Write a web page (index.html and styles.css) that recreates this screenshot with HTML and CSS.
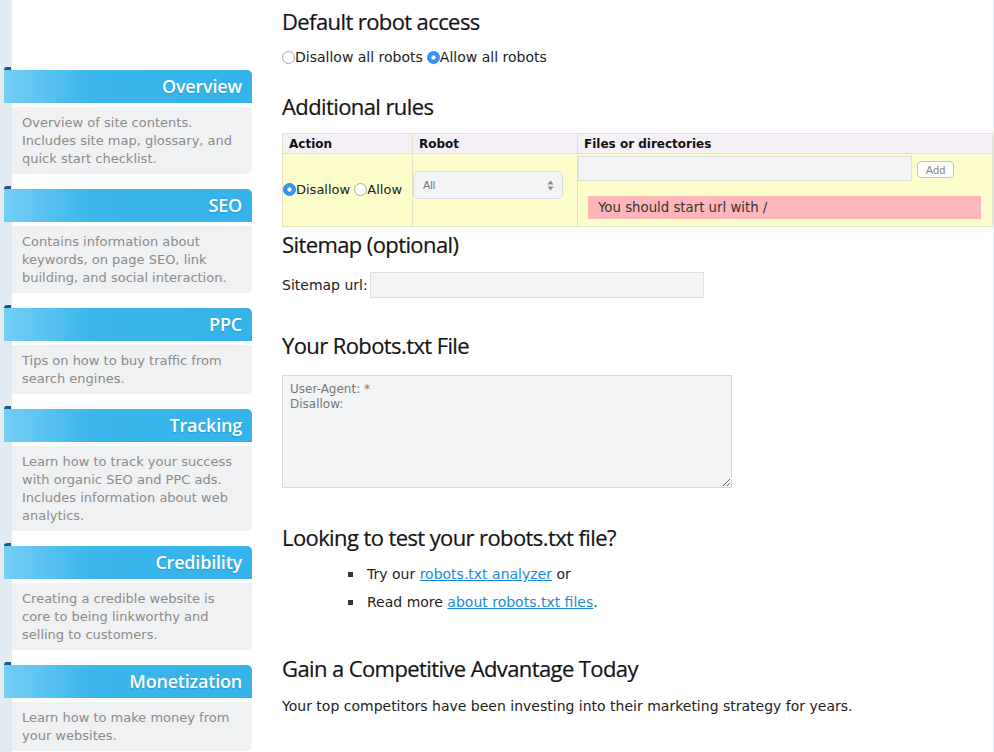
FILE: index.html
```html
<!DOCTYPE html>
<html lang="en">
<head>
<meta charset="utf-8">
<title>Robots.txt Generator</title>
<link rel="stylesheet" href="styles.css">
</head>
<body>
<div class="page">
  <aside class="sidebar">
    <div class="nav-group">
      <div class="tab"></div>
      <div class="nav-head">Overview</div>
      <div class="nav-desc">Overview of site contents. Includes site map, glossary, and quick start checklist.</div>
    </div>
    <div class="nav-group">
      <div class="tab"></div>
      <div class="nav-head">SEO</div>
      <div class="nav-desc">Contains information about keywords, on page SEO, link building, and social interaction.</div>
    </div>
    <div class="nav-group">
      <div class="tab"></div>
      <div class="nav-head">PPC</div>
      <div class="nav-desc">Tips on how to buy traffic from search engines.</div>
    </div>
    <div class="nav-group">
      <div class="tab"></div>
      <div class="nav-head">Tracking</div>
      <div class="nav-desc">Learn how to track your success with organic SEO and PPC ads. Includes information about web analytics.</div>
    </div>
    <div class="nav-group">
      <div class="tab"></div>
      <div class="nav-head">Credibility</div>
      <div class="nav-desc">Creating a credible website is core to being linkworthy and selling to customers.</div>
    </div>
    <div class="nav-group">
      <div class="tab"></div>
      <div class="nav-head">Monetization</div>
      <div class="nav-desc">Learn how to make money from your websites.</div>
    </div>
  </aside>

  <main class="main">
    <h2 class="h-first">Default robot access</h2>
    <div class="radios">
      <label class="radio"><input type="radio" name="def">Disallow all robots</label>
      <label class="radio"><input type="radio" name="def" checked>Allow all robots</label>
    </div>

    <h2 class="h-rules">Additional rules</h2>
    <table class="rules">
      <thead>
        <tr><th class="c-action">Action</th><th class="c-robot">Robot</th><th>Files or directories</th></tr>
      </thead>
      <tbody>
        <tr>
          <td class="c-action">
            <label class="radio"><input type="radio" name="act" checked>Disallow</label>
            <label class="radio"><input type="radio" name="act">Allow</label>
          </td>
          <td class="c-robot">
            <div class="select">
              <span>All</span>
              <svg width="7" height="11" viewBox="0 0 7 11"><path d="M3.5 0.5 L6.5 4.5 H0.5 Z M3.5 10.5 L6.5 6.5 H0.5 Z" fill="#8a8a8a"/></svg>
            </div>
          </td>
          <td class="c-files">
            <div class="files-row">
              <input type="text" class="files-input">
              <button class="add-btn">Add</button>
            </div>
            <div class="error">You should start url with /</div>
          </td>
        </tr>
      </tbody>
    </table>

    <h2 class="h-sitemap">Sitemap (optional)</h2>
    <div class="sitemap-row">
      <label for="sm">Sitemap url:</label>
      <input id="sm" type="text" class="sitemap-input">
    </div>

    <h2 class="h-file">Your Robots.txt File</h2>
    <textarea class="output" readonly>User-Agent: *
Disallow:</textarea>

    <h2 class="h-test">Looking to test your robots.txt file?</h2>
    <ul class="links">
      <li>Try our <a href="#">robots.txt analyzer</a> or</li>
      <li>Read more <a href="#">about robots.txt files</a>.</li>
    </ul>

    <h2 class="h-gain">Gain a Competitive Advantage Today</h2>
    <p class="para">Your top competitors have been investing into their marketing strategy for years.</p>
  </main>
  <div class="edge"></div>
</div>
</body>
</html>
```

FILE: styles.css
```css
html, body {
  margin: 0;
  padding: 0;
  background: #fff;
}
body {
  font-family: "DejaVu Sans", Verdana, sans-serif;
  font-size: 13px;
  color: #222;
}
.page {
  display: flex;
  min-height: 752px;
  overflow: hidden;
}

/* Sidebar */
.sidebar {
  flex: 0 0 248px;
  padding: 67px 0 0 4px;
  background: linear-gradient(to right, #e3ebf2 0, #e3ebf2 12px, #fff 12px);
}
.nav-group {
  margin-bottom: 12px;
}
.tab {
  width: 7px;
  height: 3px;
  background: #1d5787;
  border-radius: 4px 0 0 0;
}
.nav-head {
  height: 33px;
  line-height: 33px;
  background: linear-gradient(to right, #74cef3 0, #3bb6eb 35%, #34b3ea 100%);
  border-radius: 0 5px 0 0;
  color: #fff;
  font-family: "Open Sans", sans-serif;
  font-size: 18px;
  font-weight: 600;
  letter-spacing: -0.2px;
  text-align: right;
  padding-right: 10px;
  text-shadow: 0 1px 1px rgba(0, 70, 120, 0.25);
}
.nav-desc {
  margin: 4px 0 0 8px;
  padding: 7px 10px 6px 10px;
  background: #f0f1f3;
  border-radius: 0 0 5px 0;
  color: #8b8b8b;
  font-size: 13px;
  line-height: 18px;
}

/* Main */
.main {
  flex: 0 0 710px;
  margin-left: 30px;
  padding-top: 8px;
  font-size: 14px;
}
h2 {
  font-family: "Open Sans", sans-serif;
  font-weight: 400;
  font-size: 22px;
  line-height: 26px;
  letter-spacing: -0.6px;
  color: #141414;
  margin: 0;
  -webkit-text-stroke: 0.2px #141414;
}
.h-rules { margin-top: 27px; }
.h-sitemap { margin-top: 4px; }
.h-file { margin-top: 34px; }
.h-test { margin-top: 36px; }
.h-gain { margin-top: 39px; }

.radios {
  margin-top: 14px;
  height: 18px;
  line-height: 18px;
  display: flex;
  gap: 4px;
}
.radio {
  display: inline-flex;
  align-items: center;
  white-space: nowrap;
}
.radio input {
  -webkit-appearance: none;
  appearance: none;
  width: 13px;
  height: 13px;
  margin: 0;
  border: 1px solid #a9a9a9;
  border-radius: 50%;
  background: #fff;
  box-sizing: border-box;
  flex: 0 0 13px;
}
.radio input:checked {
  border-color: #2a86ec;
  background: radial-gradient(circle, #fff 0, #fff 1.8px, #3a92f3 2.4px);
}

/* Table */
.rules {
  margin-top: 14px;
  width: 711px;
  border-collapse: collapse;
}
.rules th, .rules td {
  border: 1px solid #e6e3c4;
  padding: 0;
}
.rules th {
  background: #f4f0f5;
  height: 19px;
  text-align: left;
  font-size: 12px;
  font-weight: bold;
  padding-left: 6px;
  color: #111;
}
.rules td {
  background: #fdfdcb;
  height: 70px;
  font-size: 13px;
}
.c-action { width: 123px; }
.rules td.c-action {
  vertical-align: middle;
  white-space: nowrap;
}
.c-robot { width: 158px; }
.rules td.c-robot { vertical-align: top; }
.select {
  margin: 17px 0 0 0;
  width: 150px;
  height: 28px;
  box-sizing: border-box;
  border: 1px solid #d9dde2;
  border-radius: 5px;
  background: #f2f4f6;
  display: flex;
  align-items: center;
  justify-content: space-between;
  padding: 0 8px 0 9px;
  font-family: "Liberation Sans", Arial, sans-serif;
  font-size: 11px;
  color: #777;
}
.rules td.c-files {
  vertical-align: top;
  padding: 2px 0 0 0;
}
.files-row {
  display: flex;
  align-items: center;
  gap: 5px;
}
.files-input {
  width: 334px;
  height: 25px;
  box-sizing: border-box;
  margin: 0;
  border: 1px solid #dcdfe2;
  background: #f2f4f6;
  border-radius: 0;
}
.add-btn {
  width: 37px;
  height: 17px;
  box-sizing: border-box;
  border: 1px solid #c2c2c2;
  border-radius: 4px;
  background: #fff;
  color: #888;
  font-family: "Liberation Sans", Arial, sans-serif;
  font-size: 11px;
  padding: 0;
  margin-top: 2px;
}
.error {
  margin: 15px 11px 5px 10px;
  height: 23px;
  line-height: 23px;
  background: #ffb6b8;
  padding-left: 10px;
  color: #333;
  font-size: 13.3px;
}

/* Sitemap */
.sitemap-row {
  margin-top: 15px;
  display: flex;
  align-items: center;
  gap: 2px;
}
.sitemap-input {
  width: 334px;
  height: 26px;
  box-sizing: border-box;
  margin: 0;
  border: 1px solid #dcdfe2;
  background: #f2f4f6;
}

/* Output */
.output {
  display: block;
  margin-top: 17px;
  width: 450px;
  height: 113px;
  box-sizing: border-box;
  border: 1px solid #d6d9dc;
  background: #f2f4f6;
  padding: 6px 7px;
  font-family: "DejaVu Sans", Verdana, sans-serif;
  font-size: 12px;
  line-height: 15px;
  color: #777;
  resize: both;
}

/* Links list */
.links {
  list-style: none;
  margin: 10px 0 0 0;
  padding: 0 0 0 66px;
}
.links li {
  height: 28px;
  line-height: 28px;
  display: flex;
  align-items: center;
  white-space: pre;
}
.links li::before {
  content: "";
  width: 5px;
  height: 5px;
  background: #333;
  margin-right: 14px;
  flex: 0 0 5px;
}
.links a {
  color: #1a8bd8;
  text-decoration: underline;
}
.para {
  margin: 16px 0 0 0;
  line-height: 18px;
}

.edge {
  flex: 0 0 2px;
  margin-left: auto;
  background: #e3ebf2;
}
```
